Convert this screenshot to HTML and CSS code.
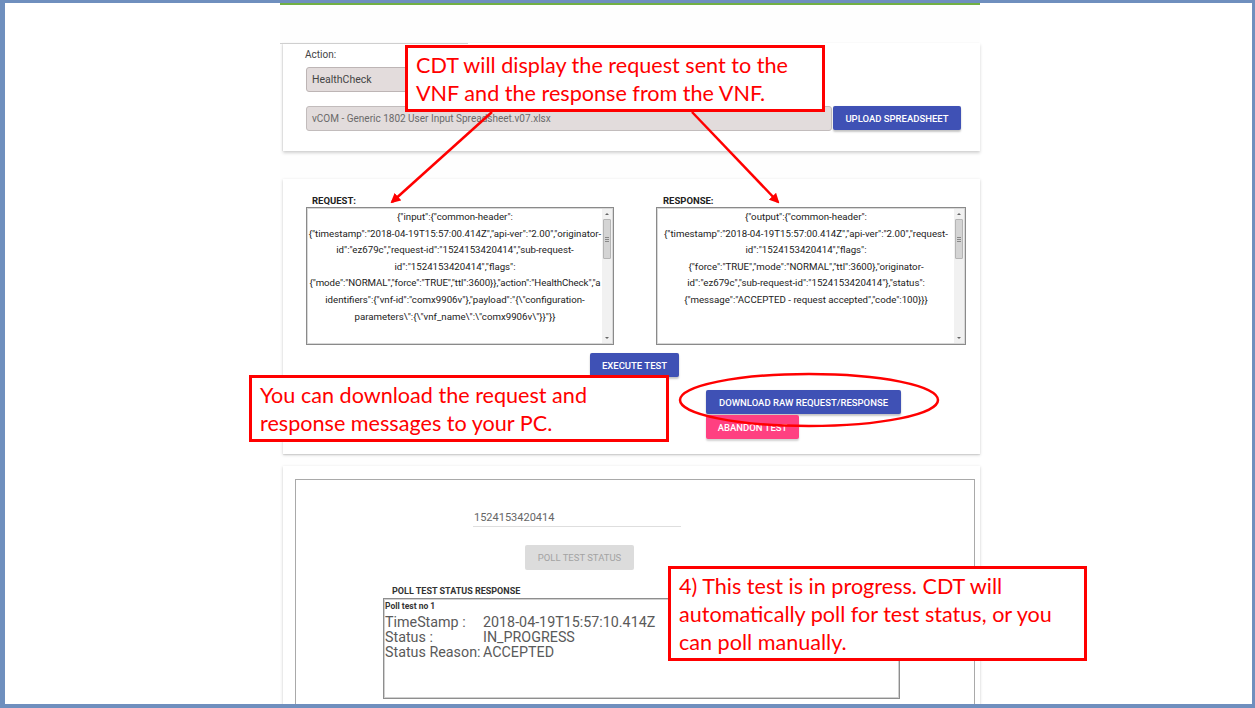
FILE: index.html
```html
<!DOCTYPE html>
<html lang="en">
<head>
<meta charset="utf-8">
<title>CDT Test</title>
<link rel="stylesheet" href="styles.css">
</head>
<body>
<div class="frame">
  <div class="app">
    <div class="topbar"></div>

    <section class="card card-action">
      <div class="tab-rule"></div>
      <div class="field-label">Action:</div>
      <div class="select">HealthCheck</div>
      <div class="file-row">
        <div class="file-input">vCOM - Generic 1802 User Input Spreadsheet.v07.xlsx</div>
        <button class="btn btn-blue btn-upload">UPLOAD SPREADSHEET</button>
      </div>
    </section>

    <section class="card card-io">
      <div class="io-cols">
        <div class="io-col io-req">
          <div class="io-label">REQUEST:</div>
          <div class="json-box">
            <div class="json-text">
              <span class="jl">{"input":{"common-header":</span>
              <span class="jl">{"timestamp":"2018-04-19T15:57:00.414Z","api-ver":"2.00","originator-</span>
              <span class="jl">id":"ez679c","request-id":"1524153420414","sub-request-</span>
              <span class="jl">id":"1524153420414","flags":</span>
              <span class="jl jl-tight">{"mode":"NORMAL","force":"TRUE","ttl":3600}},"action":"HealthCheck","a</span>
              <span class="jl">identifiers":{"vnf-id":"comx9906v"},"payload":"{\"configuration-</span>
              <span class="jl">parameters\":{\"vnf_name\":\"comx9906v\"}}"}}</span>
            </div>
            <div class="scrollbar">
              <span class="sb-arrow up"></span>
              <span class="sb-thumb"><span class="sb-grip"></span></span>
              <span class="sb-track"></span>
              <span class="sb-arrow down"></span>
            </div>
          </div>
        </div>
        <div class="io-col io-res">
          <div class="io-label">RESPONSE:</div>
          <div class="json-box">
            <div class="json-text">
              <span class="jl">{"output":{"common-header":</span>
              <span class="jl">{"timestamp":"2018-04-19T15:57:00.414Z","api-ver":"2.00","request-</span>
              <span class="jl">id":"1524153420414","flags":</span>
              <span class="jl">{"force":"TRUE","mode":"NORMAL","ttl":3600},"originator-</span>
              <span class="jl">id":"ez679c","sub-request-id":"1524153420414"},"status":</span>
              <span class="jl">{"message":"ACCEPTED - request accepted","code":100}}}</span>
            </div>
            <div class="scrollbar">
              <span class="sb-arrow up"></span>
              <span class="sb-thumb"><span class="sb-grip"></span></span>
              <span class="sb-track"></span>
              <span class="sb-arrow down"></span>
            </div>
          </div>
        </div>
      </div>
      <div class="exec-row">
        <button class="btn btn-blue btn-exec">EXECUTE TEST</button>
      </div>
      <div class="dl-group">
        <button class="btn btn-blue btn-download">DOWNLOAD RAW REQUEST/RESPONSE</button>
        <button class="btn btn-pink btn-abandon">ABANDON TEST</button>
      </div>
    </section>

    <section class="card card-poll">
      <div class="poll-box">
        <div class="req-id">1524153420414</div>
        <button class="btn btn-disabled btn-poll">POLL TEST STATUS</button>
        <div class="poll-label">POLL TEST STATUS RESPONSE</div>
        <div class="poll-resp">
          <div class="poll-title">Poll test no 1</div>
          <div class="poll-grid">
            <span>TimeStamp :</span><span>2018-04-19T15:57:10.414Z</span>
            <span>Status :</span><span>IN_PROGRESS</span>
            <span>Status Reason:</span><span>ACCEPTED</span>
          </div>
        </div>
      </div>
    </section>
  </div>

  <svg class="annot" width="1255" height="708" viewBox="0 0 1255 708">
    <defs>
      <marker id="ah" markerWidth="10" markerHeight="10" refX="8" refY="5" orient="auto" markerUnits="userSpaceOnUse">
        <path d="M0,0 L10,5 L0,10 Z" fill="#ff0000"/>
      </marker>
    </defs>
    <line x1="492" y1="112" x2="392" y2="202" stroke="#ff0000" stroke-width="2.5" marker-end="url(#ah)"/>
    <line x1="692" y1="112" x2="778" y2="202" stroke="#ff0000" stroke-width="2.5" marker-end="url(#ah)"/>
    <ellipse cx="809" cy="400" rx="129" ry="26" fill="none" stroke="#ff0000" stroke-width="2.5"/>
  </svg>

  <div class="callout callout-1">CDT will display the request sent to the<br>VNF and the response from the VNF.</div>
  <div class="callout callout-2">You can download the request and<br>response messages to your PC.</div>
  <div class="callout callout-3">4) This test is in progress. CDT will<br>automatically poll for test status, or you<br>can poll manually.</div>
</div>
</body>
</html>
```

FILE: styles.css
```css
* { box-sizing: border-box; }
html, body { margin: 0; padding: 0; }
body {
  background: #6f8fbe;
  width: 1255px;
  height: 708px;
  overflow: hidden;
  font-family: Roboto, "Liberation Sans", sans-serif;
}
.frame {
  position: relative;
  margin: 3px 3px 0 5px;
  width: 1247px;
  height: 701px;
  background: #ffffff;
  overflow: hidden;
}
.app {
  margin-left: 275px;
  width: 700px;
  height: 100%;
  background: #fefefe;
  display: flex;
  flex-direction: column;
}
.topbar {
  height: 2px;
  background: #72b043;
  flex: none;
}
.card {
  background: #ffffff;
  margin-left: 3px;
  flex: none;
  box-shadow: 0 1px 3px rgba(0,0,0,0.18), 0 1px 1px rgba(0,0,0,0.08);
}
/* card 1 */
.card-action {
  margin-top: 38px;
  padding: 0 0 20px 23px;
  box-shadow: 0 2px 3px rgba(0,0,0,0.18), -1px 0 1px rgba(0,0,0,0.06);
}
.tab-rule {
  width: 188px;
  margin-left: -26px;
  border-top: 1px solid #cfcfcf;
  height: 6px;
}
.field-label {
  font-size: 10px;
  line-height: 12px;
  color: #444;
  margin-left: -1px;
}
.select {
  margin-top: 6px;
  width: 176px;
  height: 25px;
  border: 1px solid #bdb5b5;
  border-radius: 3px;
  background: #e3dcdc;
  color: #444;
  font-size: 10.5px;
  line-height: 23px;
  padding-left: 5px;
}
.file-row {
  margin-top: 14px;
  display: flex;
  align-items: flex-start;
  gap: 1px;
}
.file-input {
  width: 526px;
  height: 25px;
  border: 1px solid #c2bcbc;
  border-radius: 3px;
  background: #e2dcdc;
  color: #6a6a6a;
  font-size: 10px;
  line-height: 23px;
  padding-left: 5px;
}
.btn {
  font-family: Roboto, "Liberation Sans", sans-serif;
  font-weight: 500;
  font-size: 9.5px;
  border: none;
  border-radius: 2px;
  padding: 0;
  color: #fff;
  text-align: center;
  display: block;
  white-space: nowrap;
}
.btn-blue {
  background: #3f51b5;
  box-shadow: 0 2px 2px rgba(0,0,0,0.22), 0 0 1px rgba(0,0,0,0.12);
}
.btn-pink {
  background: #ff4081;
  box-shadow: 0 2px 2px rgba(0,0,0,0.18);
}
.btn-disabled {
  background: #dcdcdc;
  color: #a3a3a3;
}
.btn-upload { width: 128px; height: 24px; }

/* card 2 */
.card-io {
  margin-top: 28px;
  padding: 15px 0 15px 23px;
}
.io-cols {
  display: flex;
  gap: 42px;
}
.io-req { width: 308px; }
.io-res { width: 310px; }
.io-label {
  font-size: 9.5px;
  font-weight: 700;
  color: #222;
  line-height: 13px;
  padding-left: 6px;
}
.io-res .io-label { padding-left: 7px; }
.json-box {
  height: 138px;
  border: 1px solid #8a8a8a;
  box-shadow: inset 0 0 0 1px #d8d8d8;
  background: #fff;
  display: flex;
  padding: 1px;
}
.json-text {
  flex: 1;
  overflow: hidden;
  font-size: 9.7px;
  line-height: 16.6px;
  color: #222;
  text-align: center;
}
.jl {
  display: block;
  white-space: nowrap;
  height: 16.6px;
}
.jl-tight { letter-spacing: -0.08px; }
.scrollbar {
  width: 10px;
  flex: none;
  display: flex;
  flex-direction: column;
  background: #f1f1f1;
}
.sb-arrow {
  height: 10px;
  position: relative;
  flex: none;
}
.sb-arrow::after {
  content: "";
  position: absolute;
  left: 3px;
  border-left: 2px solid transparent;
  border-right: 2px solid transparent;
}
.sb-arrow.up::after { top: 4px; border-bottom: 2px solid #666; }
.sb-arrow.down::after { top: 4px; border-top: 2px solid #666; }
.sb-thumb {
  height: 40px;
  margin: 0 1px;
  background: #d4d4d4;
  border: 1px solid #b5b5b5;
  border-radius: 1px;
  display: flex;
  align-items: center;
  justify-content: center;
  flex: none;
}
.sb-grip {
  width: 4px;
  height: 5px;
  border-top: 1px solid #888;
  border-bottom: 1px solid #888;
  position: relative;
}
.sb-grip::after {
  content: "";
  position: absolute;
  left: 0; right: 0; top: 1px;
  border-top: 1px solid #888;
}
.sb-track { flex: 1; }

.exec-row {
  margin-top: 8px;
  display: flex;
  padding-left: 284px;
}
.btn-exec { width: 89px; height: 24px; }
.dl-group {
  margin-top: 13px;
  margin-left: 400px;
  display: flex;
  flex-direction: column;
  align-items: flex-start;
  gap: 1px;
}
.btn-download { width: 195px; height: 24px; }
.btn-abandon { width: 93px; height: 24px; }

/* card 3 */
.card-poll {
  margin-top: 12px;
  padding: 13px 5px 0 12px;
  flex: 1;
}
.poll-box {
  width: 680px;
  height: 260px;
  border: 1px solid #a9a9a9;
  display: flex;
  flex-direction: column;
  align-items: flex-start;
}
.req-id {
  margin: 30px 0 0 177px;
  width: 208px;
  height: 17px;
  border-bottom: 1px solid #dedede;
  font-size: 11px;
  line-height: 16px;
  color: #666;
  padding-left: 1px;
}
.btn-poll {
  margin: 18px 0 0 229px;
  width: 109px;
  height: 25px;
  font-weight: 400;
  font-size: 9.5px;
}
.poll-label {
  margin: 15px 0 0 96px;
  font-size: 9px;
  font-weight: 700;
  color: #333;
  line-height: 12px;
}
.poll-resp {
  margin: 1px 0 0 87px;
  width: 517px;
  height: 101px;
  border: 1px solid #8e8e8e;
  box-shadow: inset 0 0 0 1px #d0d0d0;
  padding: 2px 1px;
}
.poll-title {
  font-size: 8.5px;
  font-weight: 700;
  line-height: 11px;
  color: #333;
}
.poll-grid {
  margin-top: 3px;
  display: grid;
  grid-template-columns: 98px auto;
  font-size: 14.3px;
  line-height: 15px;
  color: #5a5a5a;
  white-space: nowrap;
}

/* annotations */
.annot {
  position: absolute;
  left: -5px;
  top: -3px;
  pointer-events: none;
}
.callout {
  position: absolute;
  width: 420px;
  background: #fff;
  border: 3px solid #ff0000;
  padding: 3px 8px 2px 8px;
  color: #ff0000;
  font-family: Lato, "Open Sans", sans-serif;
  font-size: 21.6px;
  line-height: 28px;
  white-space: nowrap;
}
.callout-1 { left: 400px; top: 42px; }
.callout-2 { left: 244px; top: 372px; }
.callout-3 { left: 663px; top: 563px; width: 419px; }
```
